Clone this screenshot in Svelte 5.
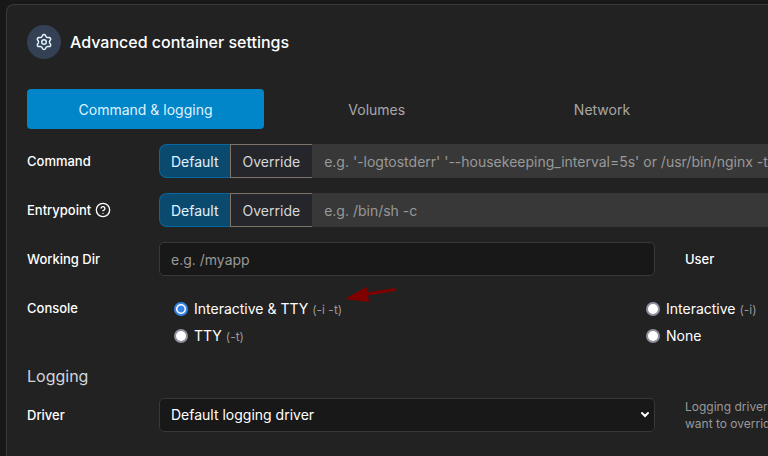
<script>
  const tabs = ['Command & logging', 'Volumes', 'Network'];
  const commands = [
    {
      id: 'command',
      label: 'Command',
      help: false,
      placeholder: "e.g. '-logtostderr' '--housekeeping_interval=5s' or /usr/bin/nginx -t"
    },
    { id: 'entrypoint', label: 'Entrypoint', help: true, placeholder: 'e.g. /bin/sh -c' }
  ];
  const consoles = [
    { id: 'both', label: 'Interactive & TTY', flag: '(-i -t)' },
    { id: 'interactive', label: 'Interactive', flag: '(-i)' },
    { id: 'tty', label: 'TTY', flag: '(-t)' },
    { id: 'none', label: 'None', flag: '' }
  ];
  let activeTab = $state(0);
  let modes = $state({ command: 'default', entrypoint: 'default' });
  let consoleMode = $state('both');
</script>

<main class="card">
  <header>
    <span class="badge">
      <svg width="18" height="18" viewBox="0 0 24 24" fill="none" stroke="currentColor" stroke-width="2" stroke-linecap="round" stroke-linejoin="round" aria-hidden="true">
        <path d="M9.395 19.371l.584 1.315a2.213 2.213 0 0 0 4.044 0l.584-1.315a2.427 2.427 0 0 1 2.47-1.423l1.43.152a2.212 2.212 0 0 0 2.022-3.502l-.847-1.163a2.43 2.43 0 0 1 0-2.859l.847-1.163a2.212 2.212 0 0 0-2.022-3.502l-1.43.152a2.43 2.43 0 0 1-2.47-1.428l-.588-1.316a2.213 2.213 0 0 0-4.044 0l-.584 1.316a2.43 2.43 0 0 1-2.47 1.428l-1.435-.152a2.212 2.212 0 0 0-2.022 3.502l.847 1.163a2.43 2.43 0 0 1 0 2.859l-.847 1.163a2.212 2.212 0 0 0 2.022 3.502l1.43-.152a2.44 2.44 0 0 1 2.479 1.423z" />
        <circle cx="12" cy="12" r="3" />
      </svg>
    </span>
    <h1>Advanced container settings</h1>
  </header>

  <nav>
    {#each tabs as tab, i}
      <button type="button" class="tab" class:active={activeTab === i} onclick={() => (activeTab = i)}>{tab}</button>
    {/each}
  </nav>

  <form>
    {#each commands as row}
      <div class="row wide">
        <label class="name" for={row.id}>
          {row.label}
          {#if row.help}
            <svg width="16" height="16" viewBox="0 0 24 24" fill="none" stroke="currentColor" stroke-width="2" stroke-linecap="round" stroke-linejoin="round" aria-hidden="true">
              <circle cx="12" cy="12" r="10" />
              <path d="M9.09 9a3 3 0 0 1 5.83 1c0 2-3 3-3 3M12 17h.01" />
            </svg>
          {/if}
        </label>
        <div class="group">
          <button type="button" class="mode first" class:on={modes[row.id] === 'default'} onclick={() => (modes[row.id] = 'default')}>Default</button>
          <button type="button" class="mode" class:on={modes[row.id] === 'override'} onclick={() => (modes[row.id] = 'override')}>Override</button>
          <input id={row.id} type="text" placeholder={row.placeholder} disabled={modes[row.id] === 'default'} />
        </div>
      </div>
    {/each}

    <div class="row">
      <label class="name" for="workdir">Working Dir</label>
      <input id="workdir" class="field" type="text" placeholder="e.g. /myapp" />
      <span class="name">User</span>
    </div>

    <fieldset class="row wide">
      <legend class="name">Console</legend>
      <div class="options">
        {#each consoles as item}
          <label class="option">
            <input type="radio" name="console" value={item.id} bind:group={consoleMode} />
            <span>{item.label} <small>{item.flag}</small></span>
          </label>
        {/each}
      </div>
    </fieldset>

    <h2>Logging</h2>

    <div class="row">
      <label class="name" for="driver">Driver</label>
      <div class="select">
        <select id="driver" class="field">
          <option>Default logging driver</option>
        </select>
        <svg width="10" height="10" viewBox="0 0 10 10" fill="none" stroke="currentColor" stroke-width="2" stroke-linecap="round" aria-hidden="true">
          <path d="M2 3l3 3 3-3" />
        </svg>
      </div>
      <p class="hint">Logging driver<br />want to overrid</p>
    </div>
  </form>

  <svg class="arrow" width="52" height="18" viewBox="0 0 52 18" aria-hidden="true">
    <path d="M50.500 3.500L22 8" stroke="#800000" stroke-width="3" />
    <path d="M0 13L21.500 1L24 16z" fill="#800000" />
  </svg>
</main>

<style>
  :global(body) {
    background: #181818;
    overflow: hidden;
  }
  .card {
    position: relative;
    box-sizing: border-box;
    min-height: 100vh;
    margin: 4px 0 0 6px;
    padding: 20px 0 20px 20px;
    border: 1px solid #3a3a3a;
    border-width: 1px 0 0 1px;
    border-radius: 8px 0 0 0;
    background: #222;
    color: #fff;
    font: 14px/20px Inter, sans-serif;
    overflow: hidden;
  }
  header {
    display: flex;
    align-items: center;
    gap: 9px;
  }
  .badge {
    display: grid;
    place-items: center;
    width: 34px;
    height: 34px;
    border-radius: 50%;
    background: #344054;
    color: #e0f2fe;
  }
  h1,
  h2 {
    margin: 0;
    font-size: 16px;
    line-height: 20px;
    font-weight: 500;
  }
  h2 {
    margin: 20px 0 12px;
    font-weight: 400;
    color: #d0d5dd;
  }
  nav {
    display: flex;
    margin: 30px 0 15px;
  }
  button,
  input,
  select {
    box-sizing: border-box;
    margin: 0;
    font: inherit;
  }
  .tab {
    width: 30.4%;
    height: 40px;
    padding: 1px 0 0;
    border: 0;
    border-radius: 4px;
    background: none;
    color: #a8a8a8;
  }
  .tab.active {
    width: 32%;
    background: #0086c9;
    color: #e0f2fe;
  }
  .row {
    display: grid;
    grid-template-columns: 132px minmax(0, 496fr) minmax(0, 113fr);
    margin: 0 0 15px;
    padding: 0;
    border: 0;
  }
  .row > :nth-child(3) {
    margin-left: 30px;
    white-space: nowrap;
  }
  .row.wide {
    display: flex;
  }
  .name {
    display: flex;
    align-items: center;
    gap: 4px;
    flex: none;
    box-sizing: border-box;
    width: 132px;
    height: 32px;
    padding: 1px 0 0;
    font-size: 13px;
    font-weight: 500;
  }
  legend.name {
    float: left;
  }
  .group {
    display: flex;
    flex: 1;
    height: 34px;
  }
  .mode {
    padding: 1px 12px 0;
    border: 1px solid #7d7369;
    border-right: 0;
    background: #25262b;
    color: #d6d6d6;
  }
  .mode.first {
    padding: 1px 11px 0;
    border-radius: 8px 0 0 8px;
  }
  .mode.on {
    border-color: #0769a2;
    background: #0b4a6f;
    color: #e0f2fe;
  }
  .group input {
    flex: 1;
    min-width: 0;
    padding: 1px 0 0 12px;
    border: 0;
    background: #383838;
    color: #fff;
  }
  input::placeholder {
    color: #999;
    opacity: 1;
  }
  .field {
    width: 100%;
    height: 34px;
    padding: 0 11px;
    border: 1px solid #383838;
    border-radius: 5px;
    background: #181818;
    color: #fff;
  }
  .select {
    position: relative;
  }
  select {
    display: block;
    appearance: none;
  }
  .select svg {
    position: absolute;
    right: 5px;
    top: 12px;
    pointer-events: none;
  }
  .options {
    display: grid;
    flex: 1;
    grid-template-columns: 472fr 122fr;
    grid-auto-rows: 20px;
    row-gap: 7px;
    padding: 8px 0 0 15px;
  }
  .option {
    display: flex;
    align-items: center;
    gap: 6px;
    white-space: nowrap;
  }
  .option input {
    appearance: none;
    width: 14px;
    height: 14px;
    border: 2px solid #8f8f9d;
    border-radius: 50%;
    background: #fff;
  }
  .option input:checked {
    border-color: #3584e4;
    background: radial-gradient(circle, #3584e4 3px, #fff 4px);
  }
  small {
    font-size: 12px;
    color: #999;
  }
  .hint {
    margin: 0;
    font-size: 12px;
    line-height: 17px;
    color: #999;
  }
  .arrow {
    position: absolute;
    left: 338px;
    top: 281px;
  }
</style>
